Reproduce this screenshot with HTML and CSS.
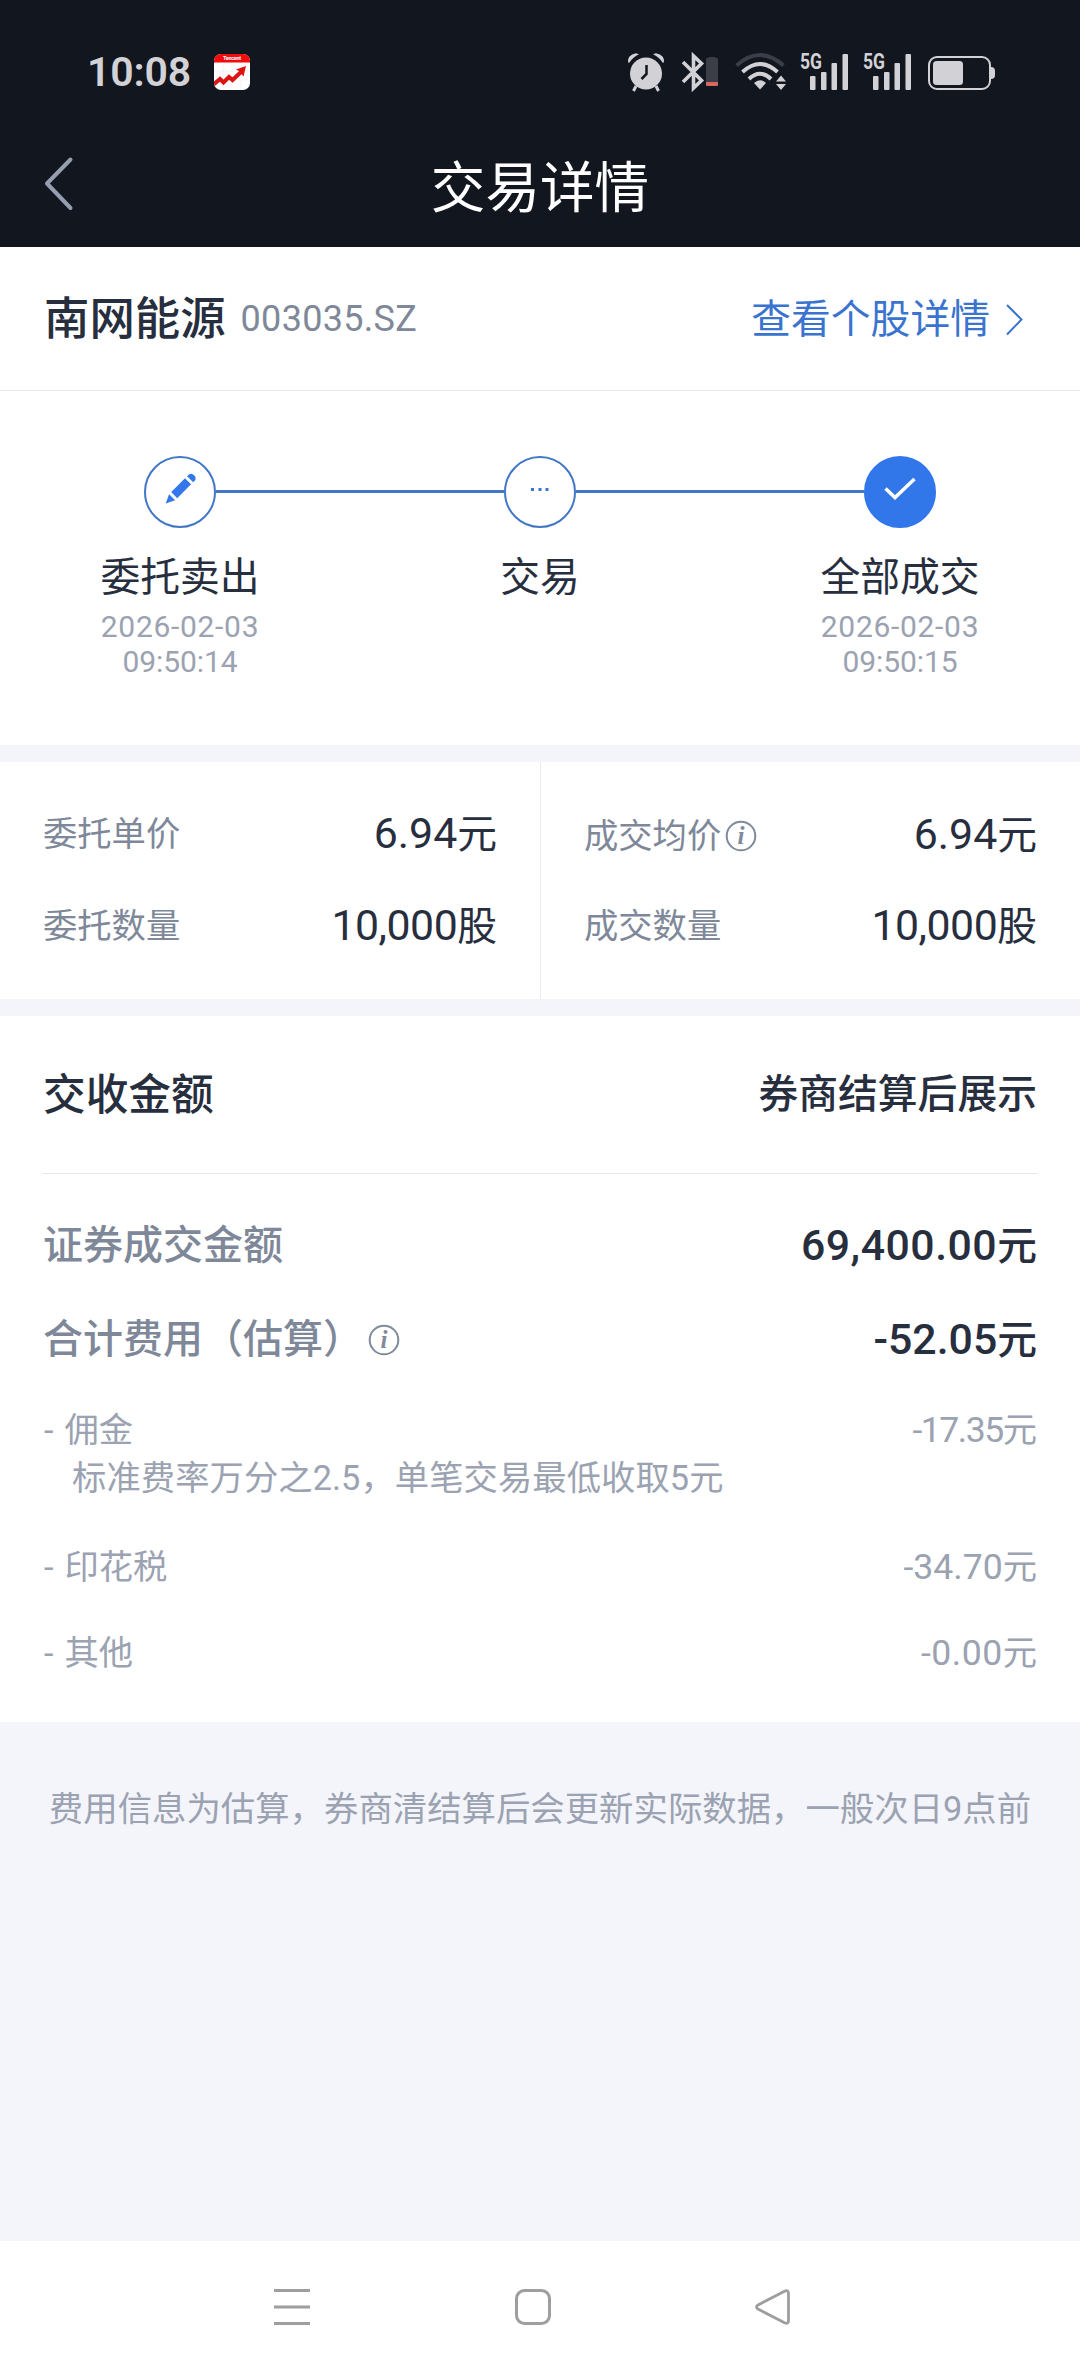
FILE: index.html
```html
<!DOCTYPE html>
<html lang="zh-CN">
<head>
<meta charset="utf-8">
<title>交易详情</title>
<link rel="stylesheet" href="styles.css">
</head>
<body>
<header class="top">
  <div class="status">
    <span class="clock">10:08</span>
    <svg class="app" width="36" height="36" viewBox="0 0 36 36">
      <defs><clipPath id="tile"><rect width="36" height="36" rx="7"/></clipPath></defs>
      <g clip-path="url(#tile)">
        <rect width="36" height="36" fill="#fff"/>
        <path d="M9 8v28M18 8v28M27 8v28M0 17h36M0 26h36" stroke="#f3f3f3" stroke-width="1"/>
        <rect width="36" height="8.500" fill="#f40b0b"/>
        <text class="brand" x="9" y="6" textLength="18">Tencent</text>
        <path d="M-1 31L6 25L9.500 28.500L15 23L18.500 26L27 18" fill="none" stroke="#dc1414" stroke-width="4"/>
        <path d="M32 12L22 15.500L25 17L29.500 22.500Z" fill="#e01010"/>
      </g>
    </svg>
    <div class="indicators">
      <svg class="alarm" width="38" height="38" viewBox="0 0 38 38">
        <circle cx="19" cy="20.500" r="16" fill="#d2d2d6"/>
        <path d="M1 9.500Q0 2 9 0.200L12 1.300Q6 4 2.500 9.500ZM37 9.500Q38 2 29 0.200L26 1.300Q32 4 35.500 9.500Z" fill="#d2d2d6"/>
        <path d="M9 33l-2.500 5M29 33l2.500 5" stroke="#d2d2d6" stroke-width="3"/>
        <path d="M19.500 12v9l-5 5" fill="none" stroke="#12161f" stroke-width="2.500"/>
      </svg>
      <svg class="bluetooth" width="38" height="38" viewBox="0 0 38 38">
        <path d="M2 9L20.500 27.500L12.500 35V3L20.500 10.500L2 29" fill="none" stroke="#d2d2d6" stroke-width="3.600"/>
        <path d="M25 6.500q0-2 3-2v-.5h6v.5q3 0 3 2V33H25Z" fill="#3b3e46"/>
        <path d="M25 29h12v2.500q0 1.500-1.500 1.500h-9q-1.500 0-1.500-1.500Z" fill="#d9665f"/>
      </svg>
      <svg class="wifi" width="52" height="38" viewBox="0 0 52 38">
        <g fill="none" stroke="#d2d2d6" stroke-width="4">
          <path d="M1.500 12.500Q25 -8.500 48.500 12.500" stroke="#3b3e46"/>
          <path d="M7.500 19Q25 3 42.500 19"/>
          <path d="M14 26Q25 15.500 36 26"/>
        </g>
        <path d="M19 30Q25 24.500 31 30L25 36.500Z" fill="#d2d2d6"/>
        <path d="M46 22.500L51 28.500H41ZM46 37L51 31H41Z" fill="#d2d2d6"/>
      </svg>
      <svg class="signal" width="49" height="38" viewBox="0 0 49 38">
        <text class="gen" x="0" y="16" textLength="22" lengthAdjust="spacingAndGlyphs">5G</text>
        <g fill="#d2d2d6"><rect x="10" y="23" width="5.500" height="14" rx="1"/><rect x="21" y="19" width="5.500" height="18" rx="1"/><rect x="31.500" y="10" width="5.500" height="27" rx="1"/><rect x="42.500" y="1" width="5.500" height="36" rx="1"/></g>
      </svg>
      <svg class="signal" width="49" height="38" viewBox="0 0 49 38">
        <text class="gen" x="0" y="16" textLength="22" lengthAdjust="spacingAndGlyphs">5G</text>
        <g fill="#d2d2d6"><rect x="10" y="23" width="5.500" height="14" rx="1"/><rect x="21" y="19" width="5.500" height="18" rx="1"/><rect x="31.500" y="10" width="5.500" height="27" rx="1"/><rect x="42.500" y="1" width="5.500" height="36" rx="1"/></g>
      </svg>
      <svg class="battery" width="67" height="34" viewBox="0 0 67 34">
        <rect x="1" y="1" width="61" height="32" rx="8" fill="none" stroke="#d2d2d6" stroke-width="2"/>
        <rect x="5" y="5" width="30" height="24" rx="3.500" fill="#d2d2d6"/>
        <path d="M63 11q4 0 4 4v4q0 4-4 4Z" fill="#d2d2d6"/>
      </svg>
    </div>
  </div>
  <nav class="titlebar">
    <svg class="back" width="30" height="54" viewBox="0 0 30 54"><path d="M27.500 2.500L4 26.500L27.500 51" fill="none" stroke="#959db0" stroke-width="4" stroke-linecap="round" stroke-linejoin="round"/></svg>
    <h1 class="title">交易详情</h1>
  </nav>
</header>
<main>
  <section class="stock">
    <span class="name">南网能源</span><span class="code">003035.SZ</span>
    <a class="link">查看个股详情<svg class="go" width="17" height="32" viewBox="0 0 17 32"><path d="M1 1L15.500 15.500L1 30.500" fill="none" stroke="#3a74cf" stroke-width="2"/></svg></a>
  </section>
  <section class="steps">
    <div class="step">
      <div class="track"><i class="rail hidden"></i><span class="dot">
        <svg width="34" height="34" viewBox="0 0 34 34"><g transform="translate(-1 1) rotate(45 17 17)" fill="#3377ea"><path d="M13 1.500V-1Q13.500 -4.200 17.200 -4.200T21.500 -1V1.500Z"/><rect x="13" y="4.500" width="8.500" height="19.500"/><path d="M13 27H21.500L17.200 36Z"/></g></svg>
      </span><i class="rail"></i></div>
      <b class="label">委托卖出</b>
      <time class="when"><span class="day">2026-02-03</span><br>09:50:14</time>
    </div>
    <div class="step">
      <div class="track"><i class="rail"></i><span class="dot">
        <svg width="18" height="3" viewBox="0 0 18 3"><path d="M0 0h3v3H0zM7.500 0h3v3h-3zM14.500 0h3v3h-3z" fill="#3d75d2"/></svg>
      </span><i class="rail"></i></div>
      <b class="label">交易</b>
    </div>
    <div class="step">
      <div class="track"><i class="rail"></i><span class="dot done">
        <svg width="34" height="24" viewBox="0 0 34 24"><path d="M2.500 11.500L12 20.500L31.500 2" fill="none" stroke="#fff" stroke-width="3.500"/></svg>
      </span><i class="rail hidden"></i></div>
      <b class="label">全部成交</b>
      <time class="when"><span class="day">2026-02-03</span><br>09:50:15</time>
    </div>
  </section>
  <section class="quotes">
    <dl class="quote">
      <div class="pair"><dt>委托单价</dt><dd><span class="num">6.94</span>元</dd></div>
      <div class="pair"><dt>委托数量</dt><dd><span class="num snug">10,000</span>股</dd></div>
    </dl>
    <dl class="quote">
      <div class="pair noted"><dt>成交均价<svg class="info" width="32" height="32" viewBox="0 0 32 32"><circle cx="16" cy="16" r="14.300" fill="none" stroke="#808a9b" stroke-width="2"/><text class="mark" x="16" y="24">i</text></svg></dt><dd><span class="num">6.94</span>元</dd></div>
      <div class="pair"><dt>成交数量</dt><dd><span class="num snug">10,000</span>股</dd></div>
    </dl>
  </section>
  <section class="bill">
    <div class="total"><strong>交收金额</strong><span>券商结算后展示</span></div>
    <div class="line main"><span class="item">证券成交金额</span><em><span class="num wide">69,400.00</span>元</em></div>
    <div class="line main"><span class="item">合计费用（估算）<svg class="info" width="32" height="32" viewBox="0 0 32 32"><circle cx="16" cy="16" r="14.300" fill="none" stroke="#808a9b" stroke-width="2"/><text class="mark" x="16" y="24">i</text></svg></span><em><span class="num">-52.05</span>元</em></div>
    <div class="line fee first"><span class="item">- 佣金</span><em><span class="sum tight">-17.35</span>元</em></div>
    <p class="rate">标准费率万分之2.5，单笔交易最低收取5元</p>
    <div class="line fee"><span class="item">- 印花税</span><em><span class="sum">-34.70</span>元</em></div>
    <div class="line fee"><span class="item">- 其他</span><em><span class="sum wide">-0.00</span>元</em></div>
  </section>
  <p class="notice">费用信息为估算，券商清结算后会更新实际数据，一般次日9点前</p>
</main>
<footer class="keys">
  <svg width="36" height="36" viewBox="0 0 36 36"><path d="M0 1.500h36M0 18h36M0 34.500h36" stroke="#9e9e9e" stroke-width="3"/></svg>
  <svg width="36" height="36" viewBox="0 0 36 36"><rect x="1.500" y="1.500" width="33" height="33" rx="8" fill="none" stroke="#9e9e9e" stroke-width="3"/></svg>
  <svg width="36" height="36" viewBox="0 0 36 36"><path d="M29.500 2.200Q33.500 0.500 33.500 4.500V31.500Q33.500 35.500 29.500 33.800L3 20Q0 18 3 16Z" fill="none" stroke="#9e9e9e" stroke-width="2.800" stroke-linejoin="round"/></svg>
</footer>
</body>
</html>
```

FILE: styles.css
```css
* { box-sizing: border-box; margin: 0; padding: 0; }
body {
  width: 1080px;
  height: 2373px;
  display: flex;
  flex-direction: column;
  overflow: hidden;
  background: #f4f5fa;
  color: #272e3e;
  font-family: Roboto, "Noto Sans CJK SC", sans-serif;
  font-size: 39.8px;
  line-height: 60px;
  white-space: nowrap;
}
svg { display: block; flex: none; overflow: visible; }
em { font-style: normal; }

.top { height: 247px; background: #12161f; }
.status { height: 123px; padding: 21px 85px 0 87px; display: flex; align-items: center; }
.clock { width: 127px; color: #d2d2d6; font-size: 41px; font-weight: 600; letter-spacing: -.2px; }
.brand { fill: #fff; font-size: 5.5px; font-weight: 700; }
.indicators { margin-left: auto; display: flex; align-items: center; }
.bluetooth { margin-left: 16px; }
.wifi { margin-left: 16px; }
.signal { margin-left: 13px; }
.signal + .signal { margin-left: 14px; }
.gen { fill: #d2d2d6; font-size: 22px; font-weight: 700; }
.battery { margin-left: 16px; margin-top: 2px; }
.titlebar { height: 124px; display: grid; grid-template-columns: 200px 1fr 200px; align-items: center; }
.back { margin-left: 43px; margin-top: -2px; }
.title { text-align: center; color: #fff; font-size: 54.6px; font-weight: 400; line-height: 80px; padding-top: 5px; }

.stock { height: 144px; padding: 2px 57px 0 44px; display: flex; align-items: center; background: #fff; border-bottom: 1px solid #e6e6e8; }
.name { font-size: 45.4px; font-weight: 500; padding-top: 1px; }
.code { margin-left: 15px; margin-top: -2px; color: #7e8899; font-size: 36px; letter-spacing: .3px; }
.link { margin-left: auto; display: flex; align-items: center; gap: 16px; color: #3a74cf; }

.steps { height: 354px; padding-top: 65px; display: grid; grid-template-columns: 360px 360px 360px; background: #fff; }
.step { text-align: center; }
.track { display: flex; align-items: center; }
.rail { flex: 1; height: 3px; margin-top: -1px; background: #4377c5; }
.hidden { visibility: hidden; }
.dot { width: 72px; height: 72px; padding-bottom: 6px; display: flex; align-items: center; justify-content: center; border: 2px solid #4377c5; border-radius: 50%; }
.done { background: #3177ea; border-color: #3177ea; }
.label { display: block; margin-top: 20px; font-weight: 400; }
.when { display: block; color: #9ba2b1; font-size: 30px; line-height: 35px; letter-spacing: -.1px; margin-top: 1px; }
.day { letter-spacing: .7px; }

.num { font-size: 42.8px; line-height: 1; }
.sum { font-size: 35.6px; line-height: 1; }
.tight { letter-spacing: -1.5px; }
.snug { letter-spacing: -.5px; }
.wide { letter-spacing: .5px; }

.quotes { height: 237px; margin-top: 17px; display: grid; grid-template-columns: 540px 540px; background: #fff; }
.quote { padding: 42px 43px 0; display: grid; grid-template-rows: 60px 60px; row-gap: 32px; }
.quote + .quote { border-left: 1px solid #ebebf0; }
.pair { display: flex; align-items: center; justify-content: space-between; }
.pair dd { padding-top: 1px; }
.noted { padding-top: 3px; }
.pair dt { display: flex; align-items: center; font-size: 34.3px; color: #7e8899; }
.info { margin-left: 4px; }
.mark { fill: #808a9b; font: italic 700 25px "Liberation Serif", serif; text-anchor: middle; }

.bill { height: 706px; margin-top: 17px; padding: 0 43px; background: #fff; }
.total { height: 158px; display: flex; align-items: center; justify-content: space-between; border-bottom: 1px solid #e6e6e8; font-weight: 500; }
.total strong { font-size: 42.7px; font-weight: 500; }
.total span { padding-top: 1px; }
.line { display: flex; align-items: center; justify-content: space-between; }
.main { height: 60px; margin-top: 34px; font-weight: 500; }
.main:nth-child(2) { margin-top: 42px; }
.main em { padding-top: 1px; }
.main .item { display: flex; align-items: center; color: #7e8899; font-size: 40px; }
.main .info { margin-left: 5px; }
.fee, .rate { font-size: 34.3px; color: #9ba2b1; height: 48px; line-height: 48px; }
.fee { margin-top: 38px; }
.fee .item { padding-left: 1px; word-spacing: 2.5px; }
.first { margin-top: 36px; }
.rate { padding-left: 29px; letter-spacing: .08px; }
.rate + .fee { margin-top: 41px; }

.notice { flex: none; margin-top: 57px; text-align: center; color: #9ba2b1; font-size: 34.4px; line-height: 60px; }
main { height: 1994px; }
.keys { height: 132px; padding: 0 0 1px 274px; display: flex; align-items: center; gap: 204.5px; background: #fff; }
```
